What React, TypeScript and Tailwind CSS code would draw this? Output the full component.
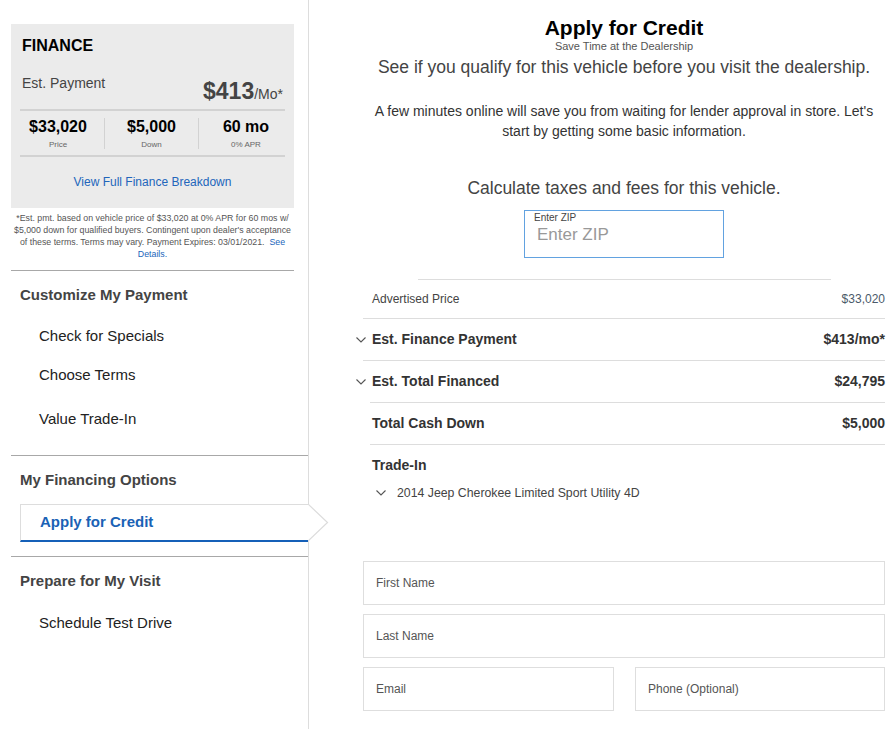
import React from "react";

function Chevron({ className }: { className?: string }) {
  return (
    <svg className={className} width="10" height="6" viewBox="0 0 10 6" fill="none">
      <path d="M0.5 0.5 L5 5 L9.5 0.5" stroke="#555" strokeWidth="1.1" />
    </svg>
  );
}

function Field({ label, className }: { label: string; className?: string }) {
  return (
    <div className={"h-[44px] border border-[#dedede] flex items-center pl-[12px] text-[12px] text-[#555] " + (className || "")}>
      {label}
    </div>
  );
}

export default function App() {
  return (
    <div className="w-[894px] h-[729px] overflow-hidden bg-white flex" style={{ fontFamily: "'Liberation Sans', Arial, sans-serif" }}>
      {/* Sidebar */}
      <div className="w-[309px] shrink-0 border-r border-[#dddddd] h-full">
        <div className="pl-[11px] pt-[24px] w-[294px]">
          <div className="bg-[#ebebeb] h-[184px] flex flex-col">
            <div className="pl-[11px] pt-[12px] text-[16px] leading-[20px] font-bold text-black">FINANCE</div>
            <div className="flex justify-between items-start px-[11px] mt-[19px] h-[34px]">
              <div className="text-[14px] leading-[16px] text-[#444]">Est. Payment</div>
              <div className="text-[#444] mt-[2px] leading-[28px]">
                <span className="text-[23px] font-bold">$413</span>
                <span className="text-[14px]">/Mo*</span>
              </div>
            </div>
            <div className="mx-[9px] h-[2px] bg-[#d2d2d2]"></div>
            <div className="mx-[9px] flex h-[44px] items-center">
              <div className="w-[85px] text-center border-r border-[#d2d2d2] h-[31px] pr-[8px]">
                <div className="text-[16px] leading-[18px] font-bold text-black">$33,020</div>
                <div className="text-[8px] leading-[10px] text-[#666] mt-[4px]">Price</div>
              </div>
              <div className="w-[94px] text-center border-r border-[#d2d2d2] h-[31px]">
                <div className="text-[16px] leading-[18px] font-bold text-black">$5,000</div>
                <div className="text-[8px] leading-[10px] text-[#666] mt-[4px]">Down</div>
              </div>
              <div className="flex-1 text-center h-[31px] pl-[8px]">
                <div className="text-[16px] leading-[18px] font-bold text-black">60 mo</div>
                <div className="text-[8px] leading-[10px] text-[#666] mt-[4px]">0% APR</div>
              </div>
            </div>
            <div className="mx-[9px] h-[2px] bg-[#d2d2d2]"></div>
            <div className="text-center text-[12px] leading-[14px] text-[#2266bb] mt-[18px]">View Full Finance Breakdown</div>
          </div>
          <div className="text-center text-[8.8px] leading-[12px] text-[#555] mt-[4px] px-[2px]">
            *Est. pmt. based on vehicle price of $33,020 at 0% APR for 60 mos w/ $5,000 down for qualified buyers. Contingent upon dealer's acceptance of these terms. Terms may vary. Payment Expires: 03/01/2021.{"\u00a0\u00a0"}
            <span className="text-[#2266bb]">See Details.</span>
          </div>
          <div className="h-px bg-[#a8a8a8] mt-[10px]"></div>
        </div>
        <div className="pl-[11px]">
          <div className="pl-[9px] pt-[16px] text-[15px] leading-[16px] font-bold text-[#444]">Customize My Payment</div>
          <div className="pl-[28px] mt-[25px] text-[15px] leading-[16px] text-[#222]">Check for Specials</div>
          <div className="pl-[28px] mt-[23px] text-[15px] leading-[16px] text-[#222]">Choose Terms</div>
          <div className="pl-[28px] mt-[28px] text-[15px] leading-[16px] text-[#222]">Value Trade-In</div>
          <div className="h-px bg-[#a8a8a8] mt-[28px]"></div>
          <div className="pl-[9px] pt-[16px] text-[15px] leading-[16px] font-bold text-[#444]">My Financing Options</div>
          <div className="ml-[9px] mt-[16px] relative h-[38px] border-t border-l border-[#dddddd] border-b-2 border-b-[#1560b8] flex items-center pl-[19px] text-[15px] font-bold text-[#1a62b5]">
            Apply for Credit
            <svg className="absolute left-full top-[-1px]" width="22" height="38" viewBox="0 0 22 38">
              <polygon points="0,0 19.5,18.5 0,37 " fill="white" />
              <polyline points="0,0 19.5,18.5 0,37" fill="none" stroke="#dcdcdc" strokeWidth="1.2" />
            </svg>
          </div>
          <div className="h-px bg-[#a8a8a8] mt-[14px]"></div>
          <div className="pl-[9px] pt-[16px] text-[15px] leading-[16px] font-bold text-[#444]">Prepare for My Visit</div>
          <div className="pl-[28px] mt-[26px] text-[15px] leading-[16px] text-[#222]">Schedule Test Drive</div>
        </div>
      </div>

      {/* Main */}
      <div className="ml-[54px] w-[522px] shrink-0">
        <div className="pt-[16px] text-center text-[21px] leading-[24px] font-bold text-black">Apply for Credit</div>
        <div className="text-center text-[11px] leading-[13px] text-[#555]">Save Time at the Dealership</div>
        <div className="text-center text-[17.5px] leading-[22px] text-[#444] mt-[3px]">See if you qualify for this vehicle before you visit the dealership.</div>
        <div className="text-center text-[14px] leading-[20px] text-[#333] mt-[23px]">
          A few minutes online will save you from waiting for lender approval in store. Let's start by getting some basic information.
        </div>
        <div className="text-center text-[17.5px] leading-[20px] text-[#444] mt-[37px]">Calculate taxes and fees for this vehicle.</div>
        <div className="flex justify-center mt-[12px]">
          <div className="w-[200px] h-[48px] border border-[#62a2e0] pl-[9px] pt-[1px]">
            <div className="text-[10px] leading-[12px] text-[#444]">Enter ZIP</div>
            <div className="text-[17px] leading-[20px] text-[#999] pl-[3px] mt-[1px]">Enter ZIP</div>
          </div>
        </div>
        <div className="mx-auto w-[413px] h-px bg-[#dddddd] mt-[21px]"></div>
        <div className="h-[39px] border-b border-[#dddddd] flex items-center justify-between pl-[9px] text-[12px] text-[#444]">
          <span>Advertised Price</span>
          <span className="text-[#4a5a6a]">$33,020</span>
        </div>
        <div className="relative h-[42px] border-b border-[#dddddd] flex items-center justify-between pl-[9px] text-[14px] font-bold text-[#333]">
          <Chevron className="absolute left-[-7px] top-[18px]" />
          <span>Est. Finance Payment</span>
          <span>$413/mo*</span>
        </div>
        <div className="relative h-[42px]">
          <div className="h-[41px] flex items-center justify-between pl-[9px] text-[14px] font-bold text-[#333]">
            <Chevron className="absolute left-[-7px] top-[18px]" />
            <span>Est. Total Financed</span>
            <span>$24,795</span>
          </div>
          <div className="ml-[7px] h-px bg-[#dddddd]"></div>
        </div>
        <div className="h-[42px]">
          <div className="h-[41px] flex items-center justify-between pl-[9px] text-[14px] font-bold text-[#333]">
            <span>Total Cash Down</span>
            <span>$5,000</span>
          </div>
          <div className="ml-[7px] h-px bg-[#dddddd]"></div>
        </div>
        <div className="pl-[9px] pt-[12px] text-[14px] leading-[16px] font-bold text-[#333]">Trade-In</div>
        <div className="flex items-center pl-[13px] mt-[13px] h-[14px] text-[12.3px] leading-[14px] text-[#444]">
          <Chevron className="mr-[11px]" />
          <span>2014 Jeep Cherokee Limited Sport Utility 4D</span>
        </div>
        <div className="mt-[61px] flex flex-col gap-[9px]">
          <Field label="First Name" />
          <Field label="Last Name" />
          <div className="flex gap-[21px]">
            <Field label="Email" className="w-[251px]" />
            <Field label="Phone (Optional)" className="flex-1" />
          </div>
        </div>
      </div>
    </div>
  );
}
